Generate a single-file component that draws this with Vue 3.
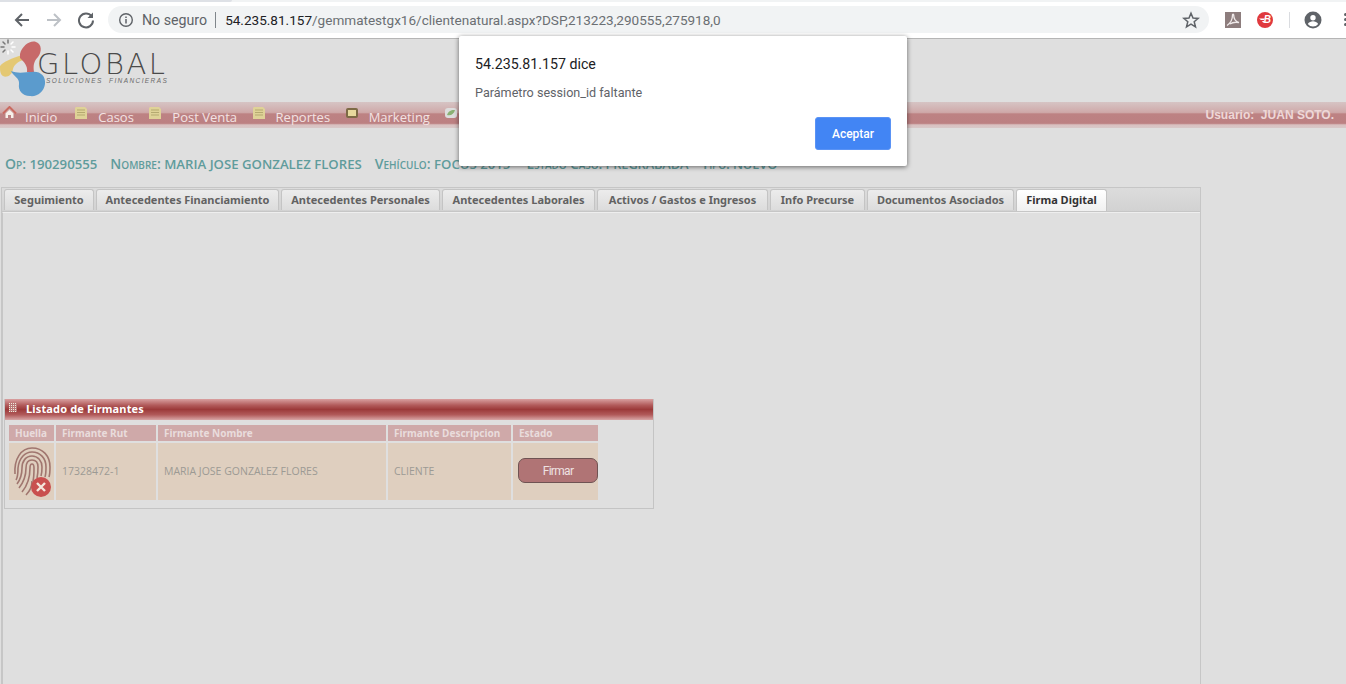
<script setup>
const menu = [
  { label: 'Inicio', icon: 'home' },
  { label: 'Casos', icon: 'doc' },
  { label: 'Post Venta', icon: 'doc' },
  { label: 'Reportes', icon: 'doc' },
  { label: 'Marketing', icon: 'box' },
  { label: 'Gestión', icon: 'leaf' },
]

const tabs = [
  { label: 'Seguimiento', width: 90 },
  { label: 'Antecedentes Financiamiento', width: 183 },
  { label: 'Antecedentes Personales', width: 159 },
  { label: 'Antecedentes Laborales', width: 153 },
  { label: 'Activos / Gastos e Ingresos', width: 171 },
  { label: 'Info Precurse', width: 95 },
  { label: 'Documentos Asociados', width: 147 },
  { label: 'Firma Digital', width: 91, active: true },
]

const arcs = [
  'M2 27C1 12 8 1 19 1c11 0 18 8 18 19 0 4 0 7-1 10',
  'M3 33c2-3 2-7 2-12C6 11 12 5 19 5c8 0 14 6 14 15 0 4 0 7-1 10',
  'M4 37c3-4 5-9 5-16 0-7 4-12 10-12s10 5 10 11c0 3 0 6-1 9',
  'M6 41c4-5 7-12 7-20 0-5 2-8 6-8s6 3 6 7c0 4 0 7-1 11',
  'M9 45c5-6 8-14 8-24 0-3 1-4 2-4s2 1 2 4c0 5 0 9-1 13',
  'M13 48c4-4 6-8 6-14',
]
</script>

<template>
  <div class="page">
    <div class="topstrip"><div class="striptab"></div></div>
    <div class="toolbar">
      <svg class="navicon" width="18" height="18" viewBox="0 0 18 18"><path d="M16 9H3M9 3 3 9l6 6" fill="none" stroke="#5f6368" stroke-width="2"/></svg>
      <svg class="navicon" width="18" height="18" viewBox="0 0 18 18"><path d="M2 9h13M9 3l6 6-6 6" fill="none" stroke="#bdc1c6" stroke-width="2"/></svg>
      <svg class="navicon" width="18" height="18" viewBox="0 0 18 18"><path d="M14.600 5.200A7 7 0 1 0 16 9.500" fill="none" stroke="#5f6368" stroke-width="2"/><path d="M16 1.500V7h-5.500z" fill="#5f6368"/></svg>
      <div class="omnibox">
        <svg width="16" height="16" viewBox="0 0 16 16"><circle cx="8" cy="8" r="6.300" fill="none" stroke="#5f6368" stroke-width="1.400"/><path d="M8 7v4.500M8 4.400v1.500" stroke="#5f6368" stroke-width="1.500"/></svg>
        <span class="secure">No seguro</span>
        <span class="pipe"></span>
        <span class="url"><b>54.235.81.157</b>/gemmatestgx16/clientenatural.aspx?DSP,213223,290555,275918,0</span>
        <svg class="star" width="18" height="18" viewBox="0 0 18 18"><path d="m9 2.200 2 4.800 5.200.400-4 3.400 1.300 5L9 13.100l-4.500 2.700 1.300-5-4-3.400L7 7z" fill="none" stroke="#5f6368" stroke-width="1.500"/></svg>
      </div>
      <div class="exts">
        <svg class="ext-pdf" width="16" height="16" viewBox="0 0 16 16"><rect width="16" height="16" fill="#8d7d7d"/><path d="M2 13.500C5 11.500 7.500 7 7.500 3c0-1.300 1.200-1.300 1.200 0 0 4 2 6.500 5.300 7.500-3-.5-7 0-9 1.500" fill="none" stroke="#f0eaea" stroke-width="1.300"/></svg>
        <span class="ext-b">
          <svg width="16" height="16" viewBox="0 0 16 16"><path d="M2 6.500h6L7 8H4zM5 9h2.500L7 10.500H6z" fill="#fff"/></svg>
          <b>B</b>
        </span>
        <span class="extsep"></span>
        <svg width="18" height="18" viewBox="0 0 18 18"><circle cx="9" cy="9" r="8.500" fill="#5f6368"/><circle cx="9" cy="6.800" r="2.700" fill="#fff"/><path d="M3.800 13c1-2 3.300-2.800 5.200-2.800s4.200.8 5.200 2.800a6.500 6.500 0 0 1-10.400 0z" fill="#fff"/></svg>
        <span class="dots"><i></i><i></i><i></i></span>
      </div>
    </div>

    <div class="content">
      <header class="logo-row">
        <div class="logo">
          <svg class="logo-mark" width="46" height="60" viewBox="0 0 46 60">
            <path d="M0 28c3-4 12-8 22-11l2 5c-6 1-10 5-11 9-1 7-7 9-10 7-3-2-3-6-3-10z" fill="#e4c873"/>
            <path d="M20 16C22 8 30 2 36 4c6 2 6 10 2 15-4 4-5 8-4 15h-7c1-6-3-10-7-14z" fill="#c76969"/>
            <path d="M11 33c7 3 15 1 21 1 8-1 14 4 13 12-1 8-8 13-15 12-8 0-12-6-11-12 1-6-6-8-8-13z" fill="#5b9bcd"/>
          </svg>
          <svg class="spinner" width="16" height="16" viewBox="0 0 16 16"><g stroke-width="1.500" stroke-linecap="round"><path d="M8 1v3M3 3l2 2M1 8h3M3 13l2-2" stroke="#777"/><path d="M13 3l-2 2M15 8h-3M13 13l-2-2M8 15v-3" stroke="#fff"/></g></svg>
          <div class="brand">GLOBAL</div>
          <div class="tagline">SOLUCIONES&nbsp; FINANCIERAS</div>
        </div>
      </header>

      <nav class="menubar">
        <div class="menu-items">
          <div v-for="item in menu" :key="item.label" class="menu-item">
            <svg v-if="item.icon === 'home'" class="home" width="15" height="14" viewBox="0 0 15 14"><path d="M1 7.500 7.500 1 14 7.500" fill="none" stroke="#c96a60" stroke-width="2"/><path d="M3.500 7.500 7.500 4l4 3.500V12H9V9H6v3H3.500z" fill="#f7f0ea"/></svg>
            <svg v-else-if="item.icon === 'doc'" width="14" height="14" viewBox="0 0 14 14"><path d="M2 1h9l2 2v10H1V2z" fill="#dfd297"/><path d="M3 4h8M3 6.500h8M3 9h8" stroke="#b5a970" stroke-width="1"/></svg>
            <svg v-else-if="item.icon === 'box'" width="14" height="14" viewBox="0 0 14 14"><rect x="1" y="2" width="12" height="10" rx="2" fill="#7d6a45"/><rect x="3" y="4" width="8" height="6" fill="#e7d99d"/></svg>
            <svg v-else width="14" height="14" viewBox="0 0 14 14"><rect x="1" y="2" width="12" height="10" rx="3" fill="#ddd"/><path d="M3 9c2-5 5-5 8-5-1 4-4 6-8 5z" fill="#8ab174"/></svg>
            <span>{{ item.label }}</span>
          </div>
        </div>
        <div class="user">Usuario:&nbsp; JUAN SOTO.</div>
      </nav>

      <div class="infoline">
        <span><em>Op:</em> 190290555</span>
        <span><em>Nombre:</em> MARIA JOSE GONZALEZ FLORES</span>
        <span><em>Vehículo:</em> FOCUS 2015</span>
        <span><em>Estado Caso:</em> PREGRABADA</span>
        <span><em>Tipo:</em> NUEVO</span>
      </div>

      <section class="tabview">
        <div class="tabstrip">
          <div
            v-for="tab in tabs"
            :key="tab.label"
            class="tab"
            :class="{ active: tab.active }"
            :style="{ width: tab.width + 'px' }"
          >{{ tab.label }}</div>
        </div>
        <div class="tabbody">
          <div class="panel">
            <div class="panel-title">
              <span class="grip"></span>
              <span>Listado de Firmantes</span>
            </div>
            <div class="grid">
              <div class="th">Huella</div>
              <div class="th">Firmante Rut</div>
              <div class="th">Firmante Nombre</div>
              <div class="th">Firmante Descripcion</div>
              <div class="th">Estado</div>
              <div class="td finger">
                <svg width="40" height="50" viewBox="0 0 40 50">
                  <path v-for="(d, i) in arcs" :key="i" :d="d" fill="none" stroke="#a0766f" stroke-width="1.600"/>
                  <circle cx="28" cy="40" r="10" fill="#c9504f"/>
                  <path d="m24 36 8 8m0-8-8 8" stroke="#f4e6dc" stroke-width="2.400"/>
                </svg>
              </div>
              <div class="td">17328472-1</div>
              <div class="td">MARIA JOSE GONZALEZ FLORES</div>
              <div class="td">CLIENTE</div>
              <div class="td state"><button class="firmar">Firmar</button></div>
            </div>
          </div>
        </div>
      </section>
    </div>

    <div class="dialog">
      <div class="dialog-title">54.235.81.157 dice</div>
      <div class="dialog-text">Parámetro session_id faltante</div>
      <div class="dialog-actions"><button class="accept">Aceptar</button></div>
    </div>
  </div>
</template>

<style scoped>
.page {
  position: relative;
  width: 1346px;
  height: 684px;
  overflow: hidden;
  background: #dfdfdf;
  font-family: "Open Sans", sans-serif;
}

.topstrip {
  height: 5px;
  background: #fff;
  box-sizing: border-box;
  border-top: 2px solid #f1f3f4;
}
.striptab {
  width: 232px;
  height: 2px;
  margin-top: -2px;
  background: #dee1e6;
  border-radius: 0 0 4px 0;
}

.toolbar {
  display: flex;
  align-items: center;
  height: 34px;
  box-sizing: border-box;
  background: #fff;
  border-bottom: 1px solid #b5b5b5;
  padding: 1px 0 5px 13px;
}
.navicon { margin-right: 14px; flex: none; }
.omnibox {
  display: flex;
  flex: none;
  align-items: center;
  width: 1101px;
  height: 27px;
  margin-left: -1px;
  box-sizing: border-box;
  padding: 0 9px 0 10px;
  background: #f1f3f4;
  border-radius: 14px;
  font-family: Roboto, sans-serif;
  font-size: 14.200px;
  color: #5f6368;
}
.secure { margin-left: 8px; }
.pipe { width: 1px; height: 16px; background: #80868b; margin: 0 9px 0 8px; }
.url { color: #6b6f73; font-size: 13.550px; }
.url b { font-weight: 400; color: #202124; }
.star { margin-left: auto; }
.exts { display: flex; align-items: center; margin-left: 16px; }
.ext-pdf { margin-right: 16px; }
.ext-b {
  position: relative;
  width: 16px;
  height: 16px;
  border-radius: 50%;
  background: #e0393e;
  color: #fff;
  font: italic 10px/16px "Liberation Sans", sans-serif;
  text-align: right;
  padding-right: 2px;
  box-sizing: border-box;
}
.ext-b svg { position: absolute; left: 0; top: 0; }
.extsep { width: 1px; height: 16px; background: #dadce0; margin: 0 14px 0 16px; }
.dots { display: flex; flex-direction: column; gap: 2px; margin-left: 22px; }
.dots i { width: 3px; height: 3px; background: #5f6368; border-radius: 50%; }

.logo-row { height: 63px; }
.logo { position: relative; width: 180px; height: 63px; }
.logo-mark { position: absolute; left: 0; top: -1px; }
.spinner { position: absolute; left: 0; top: 0; }
.brand {
  position: absolute;
  left: 37px;
  top: 15px;
  font-family: "DejaVu Sans ExtraLight", "DejaVu Sans", sans-serif;
  font-weight: 200;
  font-size: 29px;
  line-height: 20px;
  letter-spacing: 2.500px;
  color: #4a4a4a;
}
.tagline {
  position: absolute;
  left: 46px;
  top: 38px;
  font-family: "Liberation Sans", sans-serif;
  font-style: italic;
  font-size: 6.500px;
  line-height: 8px;
  letter-spacing: 1.400px;
  color: #6a6a6a;
  white-space: nowrap;
}

.menubar {
  display: flex;
  justify-content: space-between;
  height: 26px;
  box-sizing: border-box;
  background: linear-gradient(#d6c4c4 0, #cfa9a9 40%, #bd8283 46%, #bc8082 82%, #d9c0c0 88%, #d8c8c8 100%);
  color: #f3e3e3;
  font-size: 13px;
}
.menu-items { display: flex; }
.menu-item { display: flex; align-items: flex-start; margin-right: 12.500px; padding: 4px 0 0 2px; }
.menu-item:first-child { margin-right: 15px; }
.menu-item svg { margin-right: 10px; }
.menu-item svg.home { margin-right: 8px; }
.menu-item span { padding-top: 3px; line-height: 17px; }
.user {
  padding: 3px 12px 0 0;
  font-family: "Liberation Sans", sans-serif;
  font-weight: 700;
  font-size: 12px;
  line-height: 20px;
  color: #eed7d7;
}

.infoline {
  display: flex;
  gap: 13px;
  height: 59px;
  box-sizing: border-box;
  padding: 27px 0 0 5px;
  color: #5f9c9c;
  font-size: 13.200px;
  line-height: 17px;
  font-weight: 600;
  white-space: nowrap;
}
.infoline em { font-style: normal; font-variant: small-caps; font-size: 14px; }
.infoline span:nth-child(n+4) { font-size: 12.800px; letter-spacing: -0.100px; }
.infoline span:nth-child(4) { margin-left: 3px; }

.tabview {
  width: 1200px;
  height: 520px;
  margin-left: 1px;
  box-sizing: border-box;
  border: 1px solid #c6c6c6;
  border-bottom: 0;
}
.tabstrip {
  display: flex;
  gap: 2px;
  height: 24px;
  box-sizing: border-box;
  padding: 1px 0 0 2px;
  background: linear-gradient(#dcdcdc, #d2d2d2);
  border-bottom: 1px solid #c6c6c6;
}
.tab {
  flex: none;
  box-sizing: border-box;
  height: 21px;
  border: 1px solid #c4c4c4;
  border-bottom: 0;
  border-radius: 3px 3px 0 0;
  background: linear-gradient(#ececec, #dcdcdc);
  color: #626262;
  font-family: "Noto Sans", sans-serif;
  font-weight: 700;
  font-size: 11px;
  line-height: 19px;
  text-align: center;
  white-space: nowrap;
}
.tab.active {
  height: 22px;
  background: linear-gradient(#fff, #f0f0f0);
  color: #333;
}
.tabbody {
  height: 100%;
  border-top: 1px solid #eee;
  border-left: 1px solid #c6c6c6;
  padding: 186px 0 0 1px;
}

.panel {
  width: 650px;
  height: 110px;
  box-sizing: border-box;
  border: 1px solid #c4c4c4;
  border-top: 0;
}
.panel-title {
  display: flex;
  align-items: center;
  gap: 9px;
  height: 21px;
  box-sizing: border-box;
  padding: 0 0 3px 4px;
  background: linear-gradient(#d9a0a0 0, #b15a5a 30%, #9c3a3a 50%, #b15a5a 75%, #d8a6a6 100%);
  color: #fff;
  font-family: "Noto Sans", sans-serif;
  font-weight: 700;
  font-size: 11px;
  letter-spacing: 0.150px;
}
.grip {
  width: 8px;
  height: 9px;
  margin-bottom: 1px;
  background:
    repeating-linear-gradient(0deg, transparent 0 1px, #b77 1px 2px),
    repeating-linear-gradient(90deg, #eed 0 1px, #b77 1px 2px);
}
.grid {
  display: grid;
  grid-template-columns: 45px 100px 228px 123px 85px;
  grid-template-rows: 16px 57px;
  gap: 2px;
  padding: 5px 0 0 4px;
}
.th {
  padding-left: 6px;
  background: #cfa9a9;
  color: #e9dcdc;
  font-family: "Noto Sans", sans-serif;
  font-weight: 700;
  font-size: 10px;
  line-height: 16px;
  white-space: nowrap;
}
.td {
  display: flex;
  align-items: center;
  box-sizing: border-box;
  padding: 0 0 2px 6px;
  background: #dfcfbf;
  color: #9c9a94;
  font-size: 10.500px;
  white-space: nowrap;
}
.finger { padding: 0 0 0 4px; }
.state { padding: 0 0 2px 5px; }
.firmar {
  width: 80px;
  height: 25px;
  padding: 0;
  box-sizing: border-box;
  border: 1px solid #6f5353;
  border-radius: 7px;
  background: #b07475;
  color: #eee2e2;
  font-family: Roboto, sans-serif;
  font-size: 12px;
  letter-spacing: -0.700px;
}

.dialog {
  position: absolute;
  left: 459px;
  top: 36px;
  width: 448px;
  height: 130px;
  box-sizing: border-box;
  padding: 19px 16px 0;
  background: #fff;
  border-radius: 2px;
  box-shadow: 0 1px 5px rgba(0, 0, 0, 0.55);
  font-family: Roboto, sans-serif;
}
.dialog-title { font-size: 14.200px; line-height: 18px; color: #202124; }
.dialog-text { margin-top: 12px; font-size: 12.600px; line-height: 16px; color: #5f6368; }
.dialog-actions { display: flex; justify-content: flex-end; margin-top: 16px; }
.accept {
  width: 76px;
  height: 33px;
  padding: 0;
  border: 1px solid #5a93f5;
  border-radius: 3px;
  background: #4285f4;
  color: #fff;
  font-family: Roboto, sans-serif;
  font-weight: 500;
  font-size: 12px;
}
</style>
